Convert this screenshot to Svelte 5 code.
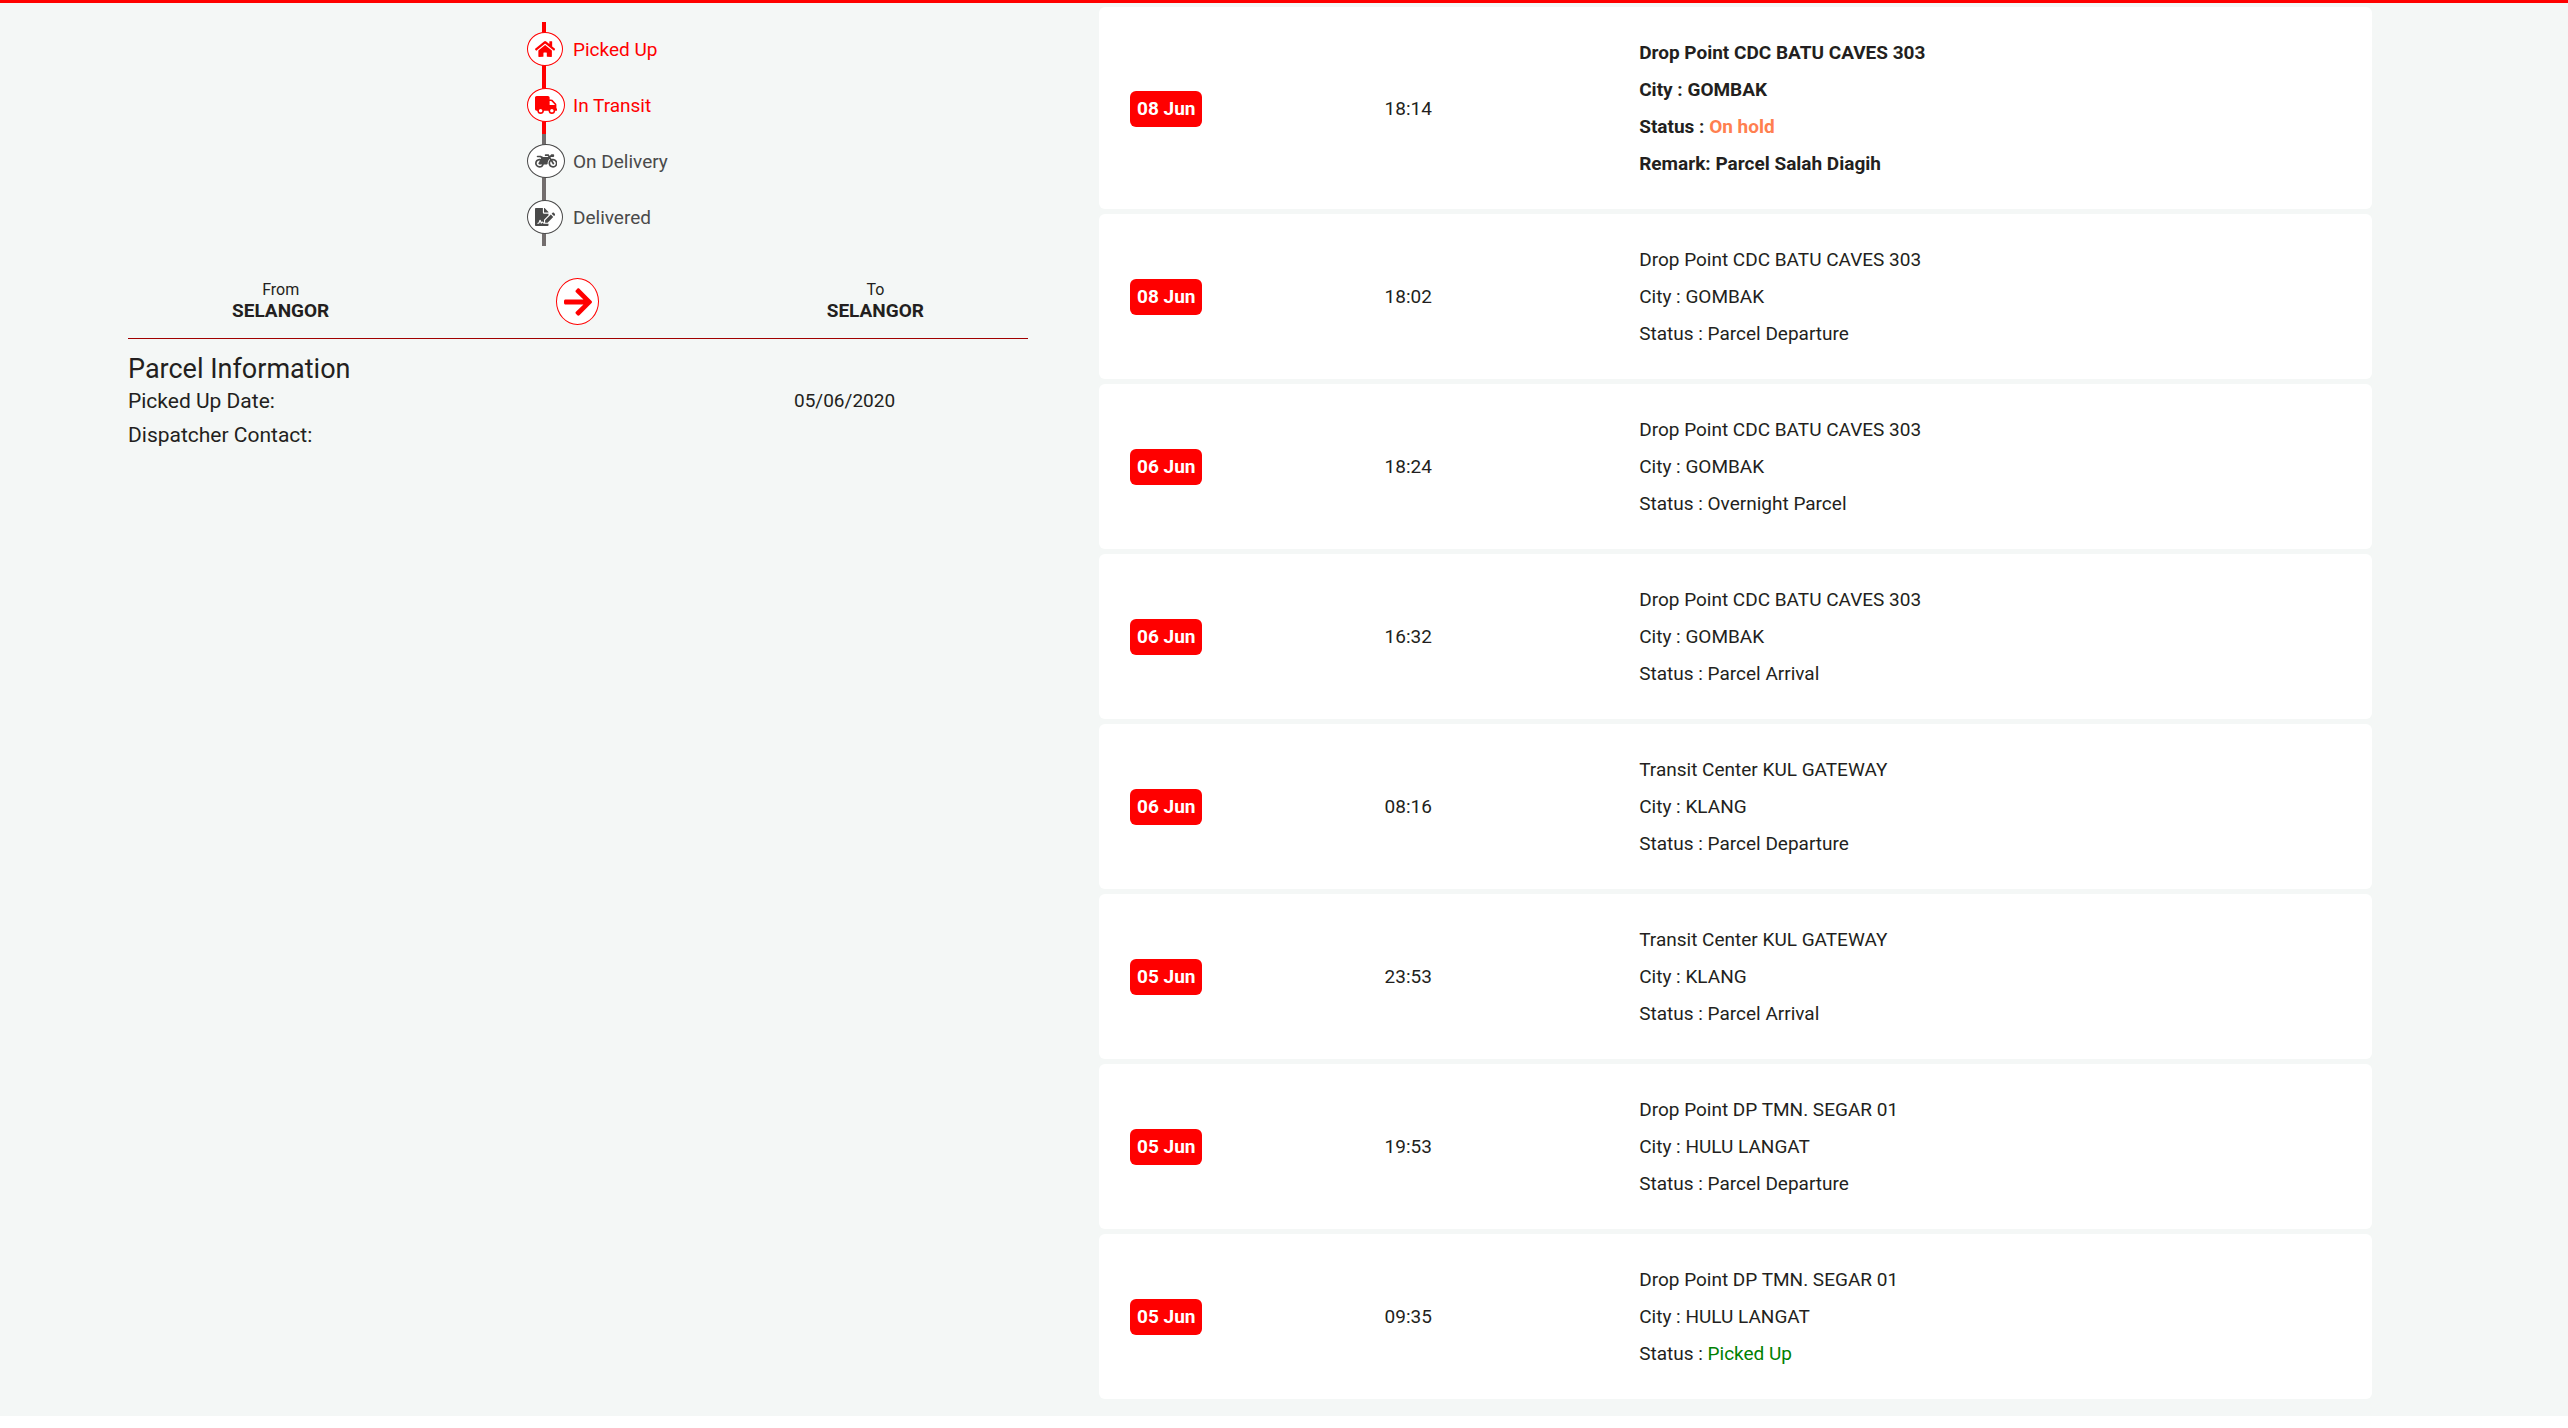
<script lang="ts">
	const icons = {
		home: {
			box: '0 0 576 512',
			path: 'M280.37 148.26L96 300.11V464a16 16 0 0 0 16 16l112.06-.29a16 16 0 0 0 15.92-16V368a16 16 0 0 1 16-16h64a16 16 0 0 1 16 16v95.64a16 16 0 0 0 16 16.05L464 480a16 16 0 0 0 16-16V300L295.67 148.26a12.19 12.19 0 0 0-15.3 0zM571.6 251.47L488 182.56V44.05a12 12 0 0 0-12-12h-56a12 12 0 0 0-12 12v72.61L318.47 43a48 48 0 0 0-61 0L4.34 251.47a12 12 0 0 0-1.6 16.9l25.5 31A12 12 0 0 0 45.15 301l235.22-193.74a12.19 12.19 0 0 1 15.3 0L530.9 301a12 12 0 0 0 16.9-1.6l25.5-31a12 12 0 0 0-1.7-16.93z'
		},
		truck: {
			box: '0 0 640 512',
			path: 'M624 352h-16V243.9c0-12.7-5.1-24.9-14.1-33.9L494 110.1c-9-9-21.2-14.1-33.9-14.1H416V48c0-26.5-21.5-48-48-48H48C21.5 0 0 21.5 0 48v320c0 26.5 21.5 48 48 48h16c0 53 43 96 96 96s96-43 96-96h128c0 53 43 96 96 96s96-43 96-96h48c8.8 0 16-7.2 16-16v-32c0-8.8-7.2-16-16-16zM160 464c-26.5 0-48-21.5-48-48s21.5-48 48-48 48 21.5 48 48-21.5 48-48 48zm320 0c-26.5 0-48-21.5-48-48s21.5-48 48-48 48 21.5 48 48-21.5 48-48 48zm80-208H416V144h44.1l99.9 99.9V256z'
		},
		motorcycle: {
			box: '0 0 640 512',
			path: 'M512.9 192c-14.9-.1-29.1 2.3-42.4 6.9L437.6 144H520c13.3 0 24-10.7 24-24V88c0-13.3-10.7-24-24-24h-45.3c-6.8 0-13.3 2.9-17.8 7.9l-37.5 41.7-22.8-38C392.2 68.4 384.4 64 376 64h-80c-8.8 0-16 7.2-16 16v16c0 8.8 7.2 16 16 16h66.4l19.2 32H227.9c-17.7-23.1-44.9-40-99.9-40H72.5C59 104 47.7 115 48 128.5c.2 13 10.9 23.5 24 23.5h56c24.5 0 38.7 10.9 47.8 24.8l-11.3 20.5c-13-3.9-26.9-5.7-41.3-5.2C55.9 194.5 1.6 249.6 0 317c-1.6 72.1 56.3 131 128 131 59.6 0 109.7-40.8 124-96h84.2c13.7 0 24.6-11.4 24-25.1-2.1-47.1 17.5-93.7 56.2-125l12.5 20.8c-27.6 23.7-45.1 58.9-44.8 98.2.5 69.6 57.2 126.5 126.8 127.1 71.6.7 129.8-57.5 129.2-129.1-.7-69.6-57.6-126.4-127.2-126.9zM128 400c-44.1 0-80-35.9-80-80s35.9-80 80-80c4.2 0 8.4.3 12.5 1L99 316.4c-8.8 16 2.8 35.6 21 35.6h81.3c-12.4 28.2-40.6 48-73.3 48zm463.9-75.6c-2.2 40.6-35 73.4-75.5 75.5-46.1 2.5-84.4-34.3-84.4-79.9 0-21.4 8.4-40.8 22.1-55.1l49.4 82.4c4.5 7.6 14.4 10 22 5.5l13.7-8.2c7.6-4.5 10-14.4 5.5-22l-48.6-80.9c5.2-1.1 10.5-1.6 15.9-1.6 45.6-.1 82.3 38.2 79.9 84.3z'
		},
		signature: {
			box: '0 0 576 512',
			path: 'M218.17 424.14c-2.95-5.92-8.09-6.52-10.17-6.52s-7.22.59-10.02 6.19l-7.67 15.34c-6.37 12.78-25.03 11.37-29.48-2.09L144 386.59l-10.61 31.88c-5.89 17.66-22.38 29.53-41 29.53H80c-8.84 0-16-7.16-16-16s7.16-16 16-16h12.39c4.83 0 9.11-3.08 10.64-7.66l18.19-54.64c3.3-9.81 12.44-16.41 22.78-16.41s19.48 6.59 22.77 16.41l13.88 41.64c19.75-16.19 54.06-9.7 66 14.16 1.89 3.78 5.49 5.95 9.36 6.26v-82.12l128-127.09V160H248c-13.2 0-24-10.8-24-24V0H24C10.7 0 0 10.7 0 24v464c0 13.3 10.7 24 24 24h336c13.3 0 24-10.7 24-24v-40l-128-.11c-16.12-.31-30.58-9.28-37.83-23.75zM384 121.9c0-6.3-2.5-12.4-7-16.9L279.1 7c-4.5-4.5-10.6-7-17-7H256v128h128v-6.1zm-96 225.06V416h68.99l161.68-162.78-67.88-67.88L288 346.96zm280.54-179.63l-31.87-31.87c-9.94-9.94-26.07-9.94-36.01 0l-27.25 27.25 67.88 67.88 27.25-27.25c9.95-9.94 9.95-26.07 0-36.01z'
		},
		arrow: {
			box: '0 0 448 512',
			path: 'M190.5 66.9l22.2-22.2c9.4-9.4 24.6-9.4 33.9 0L441 239c9.4 9.4 9.4 24.6 0 33.9L246.6 467.3c-9.4 9.4-24.6 9.4-33.9 0l-22.2-22.2c-9.5-9.5-9.3-25 .4-34.3L311.4 296H24c-13.3 0-24-10.7-24-24v-32c0-13.3 10.7-24 24-24h287.4L190.9 101.2c-9.8-9.3-10-24.8-.4-34.3z'
		}
	};

	const steps = [
		{ label: 'Picked Up', icon: icons.home, wide: false, done: true },
		{ label: 'In Transit', icon: icons.truck, wide: true, done: true },
		{ label: 'On Delivery', icon: icons.motorcycle, wide: true, done: false },
		{ label: 'Delivered', icon: icons.signature, wide: false, done: false }
	];

	const events = [
		{ date: '08 Jun', time: '18:14', place: 'Drop Point CDC BATU CAVES 303', city: 'GOMBAK', status: 'On hold', tone: 'hold', remark: 'Parcel Salah Diagih' },
		{ date: '08 Jun', time: '18:02', place: 'Drop Point CDC BATU CAVES 303', city: 'GOMBAK', status: 'Parcel Departure' },
		{ date: '06 Jun', time: '18:24', place: 'Drop Point CDC BATU CAVES 303', city: 'GOMBAK', status: 'Overnight Parcel' },
		{ date: '06 Jun', time: '16:32', place: 'Drop Point CDC BATU CAVES 303', city: 'GOMBAK', status: 'Parcel Arrival' },
		{ date: '06 Jun', time: '08:16', place: 'Transit Center KUL GATEWAY', city: 'KLANG', status: 'Parcel Departure' },
		{ date: '05 Jun', time: '23:53', place: 'Transit Center KUL GATEWAY', city: 'KLANG', status: 'Parcel Arrival' },
		{ date: '05 Jun', time: '19:53', place: 'Drop Point DP TMN. SEGAR 01', city: 'HULU LANGAT', status: 'Parcel Departure' },
		{ date: '05 Jun', time: '09:35', place: 'Drop Point DP TMN. SEGAR 01', city: 'HULU LANGAT', status: 'Picked Up', tone: 'picked' }
	];
</script>

<main class="tracking">
	<section class="summary">
		<ol class="steps">
			{#each steps as step (step.label)}
				<li class:done={step.done}>
					<span class="step-icon" class:wide={step.wide}>
						<svg viewBox={step.icon.box} aria-hidden="true"><path d={step.icon.path} /></svg>
					</span>
					{step.label}
				</li>
			{/each}
		</ol>

		<div class="route">
			<p>From<strong>SELANGOR</strong></p>
			<span class="route-icon">
				<svg viewBox={icons.arrow.box} aria-hidden="true"><path d={icons.arrow.path} /></svg>
			</span>
			<p>To<strong>SELANGOR</strong></p>
		</div>

		<h2>Parcel Information</h2>
		<dl class="info">
			<dt>Picked Up Date:</dt>
			<dd>05/06/2020</dd>
			<dt>Dispatcher Contact:</dt>
			<dd></dd>
		</dl>
	</section>

	<ol class="events">
		{#each events as event, i (i)}
			<li class:latest={i === 0}>
				<div><span class="date">{event.date}</span></div>
				<time>{event.time}</time>
				<div class="details">
					<p>{event.place}</p>
					<p>City : {event.city}</p>
					<p>Status : <span class={event.tone}>{event.status}</span></p>
					{#if event.remark}
						<p>Remark: {event.remark}</p>
					{/if}
				</div>
			</li>
		{/each}
	</ol>
</main>

<style>
	:global(body) {
		margin: 0;
		background: #fff;
	}

	.tracking {
		display: grid;
		grid-template-columns: minmax(0, 900fr) minmax(0, 1273fr);
		gap: 71px;
		align-items: start;
		border-top: 3px solid #f00;
		padding: 4px 196px 17px 128px;
		background: #f4f7f6;
		color: #231f20;
		font-family: Roboto, 'Liberation Sans', sans-serif;
		font-size: 19px;
	}

	ol,
	dl,
	dd,
	p,
	h2 {
		margin: 0;
		padding: 0;
		list-style: none;
	}

	svg {
		display: block;
		fill: currentColor;
	}

	.steps {
		margin-left: 399px;
		padding-top: 15px;
	}

	/* the connecting line runs behind the icon of each step */
	.steps li {
		display: grid;
		grid-template-columns: 46px 1fr;
		align-items: center;
		box-sizing: border-box;
		height: 56px;
		padding-bottom: 2px;
		background: linear-gradient(#726d6d, #726d6d) 15px 0 / 4px 100% no-repeat;
		color: #4a4a4a;
	}

	.steps .done {
		background-image: linear-gradient(#f00, #f00);
		color: #f00;
	}

	.step-icon,
	.route-icon {
		box-sizing: border-box;
		display: grid;
		place-items: center;
		border: 1px solid;
		border-radius: 50%;
		background: #fff;
	}

	.step-icon {
		width: 36px;
		height: 34px;
	}

	.step-icon.wide {
		width: 38px;
	}

	.step-icon svg {
		height: 18px;
	}

	.route {
		display: grid;
		grid-template-columns: repeat(3, 1fr);
		align-items: center;
		justify-items: center;
		margin-top: 32px;
		border-bottom: 1px solid #a00000;
		padding: 0 4px 13px;
		text-align: center;
	}

	.route p {
		padding-bottom: 4px;
		font-size: 16px;
		line-height: 21px;
	}

	.route strong {
		display: block;
		font-size: 19px;
	}

	.route-icon {
		width: 43px;
		height: 47px;
		color: #f00;
	}

	.route-icon svg {
		height: 32px;
	}

	h2 {
		margin-top: 15px;
		font-size: 27px;
		font-weight: 400;
		line-height: 30px;
	}

	.info {
		display: grid;
		grid-template-columns: 74% 1fr;
		line-height: 34px;
	}

	.info dt {
		font-size: 21px;
	}

	.events {
		display: grid;
		gap: 5px;
	}

	.events li {
		display: grid;
		grid-template-columns: 20% 20% 60%;
		align-items: center;
		border-radius: 6px;
		padding: 27px 0;
		background: #fff;
		line-height: 37px;
	}

	.events li > * {
		padding-left: 31px;
	}

	.date {
		display: inline-block;
		border-radius: 6px;
		padding: 0 7px;
		background: #f00;
		color: #fff;
		font-weight: 700;
		line-height: 36px;
	}

	.latest .details {
		font-weight: 700;
	}

	.hold {
		color: #ff7f50;
	}

	.picked {
		color: #008000;
	}
</style>
